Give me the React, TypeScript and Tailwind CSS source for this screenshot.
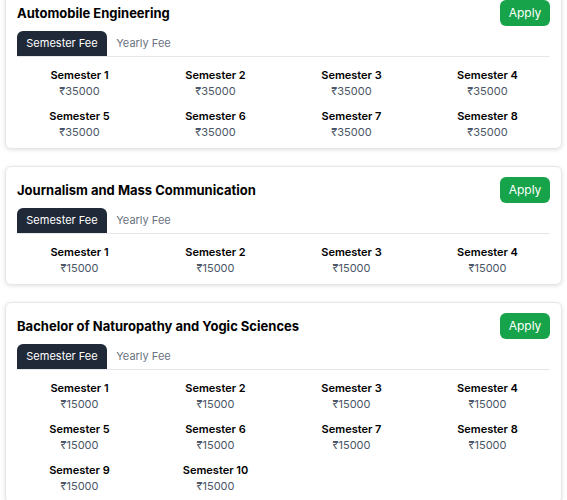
import React from "react"

type Course = {
    name: string
    semesters: number
    fee: number
}

const courses: Course[] = [
    { name: "Automobile Engineering", semesters: 8, fee: 35000 },
    { name: "Journalism and Mass Communication", semesters: 4, fee: 15000 },
    { name: "Bachelor of Naturopathy and Yogic Sciences", semesters: 10, fee: 15000 },
]

function CourseCard({ course }: { course: Course }) {
    const sems = Array.from({ length: course.semesters }, (_, i) => i + 1)

    return (
        <div className="bg-white border border-gray-200 rounded-md shadow-[0_1px_4px_rgba(0,0,0,0.12)] px-[11px] pt-[10px] pb-[8px]">
            {/* Header */}
            <div className="flex items-center justify-between">
                <h2 className="text-[13px] leading-4 font-bold text-black">{course.name}</h2>
                <button className="h-[26px] w-[50px] rounded-md bg-[#16a34a] text-white text-[12px]">
                    Apply
                </button>
            </div>

            {/* Tabs */}
            <div className="mt-[5px] flex border-b border-gray-200">
                <div className="h-[25px] w-[90px] flex items-center justify-center rounded-t-md bg-[#1f2937] text-white text-[11px]">
                    Semester Fee
                </div>
                <div className="h-[25px] w-[73px] flex items-center justify-center text-gray-500 text-[11px]">
                    Yearly Fee
                </div>
            </div>

            {/* Fee grid */}
            <div className="grid grid-cols-4 gap-x-[11px] gap-y-[9px] pt-[10px]">
                {sems.map((n) => (
                    <div key={n} className="flex flex-col items-center">
                        <span className="text-[11px] leading-4 font-semibold text-black">
                            Semester {n}
                        </span>
                        <span className="text-[11px] leading-4 text-gray-600">
                            ₹{course.fee}
                        </span>
                    </div>
                ))}
            </div>
        </div>
    )
}

export default function App() {
    return (
        <div
            className="h-[500px] overflow-hidden bg-white px-[5px]"
            style={{ fontFamily: "Inter, 'Noto Sans', sans-serif" }}
        >
            <div className="-mt-[11px] flex flex-col gap-[17px]">
                {courses.map((c) => (
                    <CourseCard key={c.name} course={c} />
                ))}
            </div>
        </div>
    )
}
